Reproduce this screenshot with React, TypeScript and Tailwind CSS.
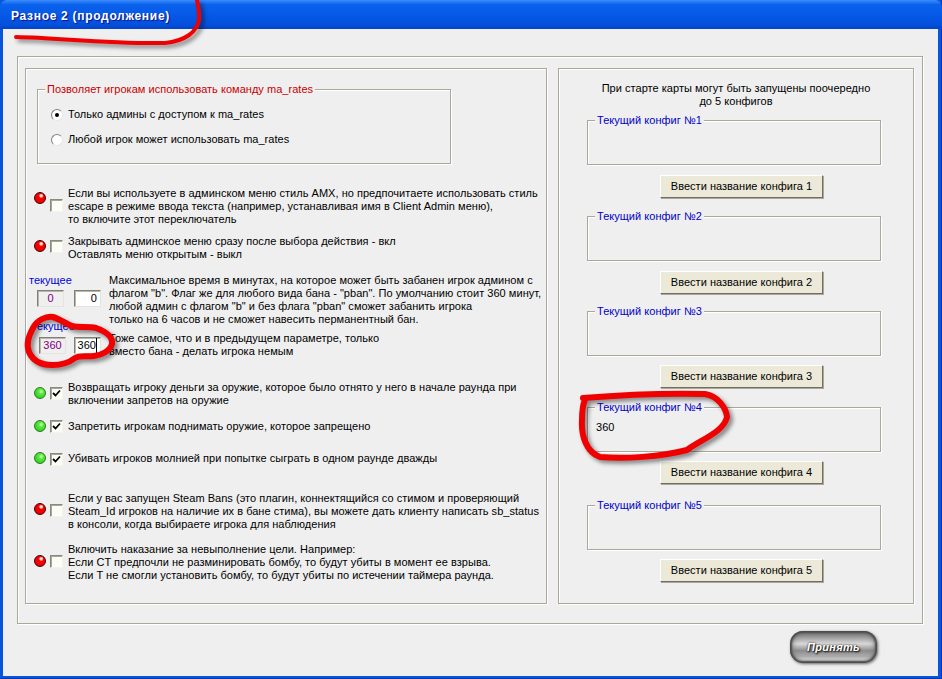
const etched = "border border-[#aca899] shadow-[1px_1px_0_#fff,inset_1px_1px_0_#fff]";

function Led({ on }: { on?: boolean }) {
  return (
    <span
      className={`block w-[12px] h-[12px] rounded-full shrink-0 border ${
        on
          ? "border-[#2a7a20] bg-[radial-gradient(circle_at_62%_35%,#d8ffd0_0%,#58e83c_28%,#34d420_70%,#22a014_100%)]"
          : "border-[#400000] bg-[radial-gradient(circle_at_62%_28%,#ffffff_0%,#ffd0d0_12%,#f80000_26%,#f00000_75%,#a00000_100%)]"
      }`}
    />
  );
}

function Check({ checked }: { checked?: boolean }) {
  return (
    <span className="block w-[13px] h-[13px] shrink-0 bg-[#fdfdf8] border border-[#8a8a7c] border-r-[#f4f4ea] border-b-[#f4f4ea] shadow-[inset_1px_1px_0_#a8a898]">
      {checked && (
        <svg viewBox="0 0 11 11" className="w-[11px] h-[11px]">
          <path d="M2 5 L4.5 7.5 L9 2.5" fill="none" stroke="#000" strokeWidth="1.8" />
        </svg>
      )}
    </span>
  );
}

function Radio({ checked }: { checked?: boolean }) {
  return (
    <span className="flex items-center justify-center w-[12px] h-[12px] rounded-full bg-white border border-[#808080] border-r-[#e8e8e0] border-b-[#e8e8e0] shrink-0">
      {checked && <span className="block w-[4px] h-[4px] rounded-full bg-black" />}
    </span>
  );
}

function OptionRow({
  on,
  checked,
  mt,
  h,
  ledTop,
  checkTop,
  lines,
}: {
  on?: boolean;
  checked?: boolean;
  mt: string;
  h: string;
  ledTop: string;
  checkTop: string;
  lines: string[];
}) {
  return (
    <div className={`flex pl-[8px] ${mt} ${h}`}>
      <div className={`w-[16px] ${ledTop}`}>
        <Led on={on} />
      </div>
      <div className={`w-[18px] ${checkTop}`}>
        <Check checked={checked} />
      </div>
      <div className="whitespace-nowrap">
        {lines.map((l) => (
          <div key={l}>{l}</div>
        ))}
      </div>
    </div>
  );
}

function ReadBox({ value }: { value: string }) {
  return (
    <span className="block w-[27px] h-[17px] leading-[15px] text-center bg-[#efefef] text-[#800080] border border-[#808078] border-r-[#e4e4dc] border-b-[#e4e4dc] shadow-[inset_1px_1px_0_#b8b8a8]">
      {value}
    </span>
  );
}

function EditBox({ value, ml, caret }: { value: string; ml: string; caret?: boolean }) {
  return (
    <span
      className={`flex justify-end w-[27px] h-[17px] ${ml} leading-[15px] pr-[3px] bg-white text-black border border-[#808078] border-r-[#e4e4dc] border-b-[#e4e4dc] shadow-[inset_1px_1px_0_#b8b8a8]`}
    >
      <span className={caret ? "border-r border-black" : ""}>{value}</span>
    </span>
  );
}

function ConfigGroup({ n, mt, btnMt, value }: { n: number; mt: string; btnMt: string; value?: string }) {
  return (
    <div className={mt}>
      <div className={`relative ml-[28px] w-[294px] h-[45px] ${etched}`}>
        <span className="absolute left-[7px] top-[-7px] bg-[#efefef] px-[2px] text-[#0000c8] whitespace-nowrap">
          Текущий конфиг №{n}
        </span>
        {value && <span className="absolute left-[8px] top-[13px] text-black">{value}</span>}
      </div>
      <button
        className={`block ${btnMt} ml-[101px] w-[163px] h-[23px] bg-[#ece9d8] text-black border border-white border-r-[#716f64] border-b-[#716f64] shadow-[1px_1px_0_#aca899]`}
      >
        Ввести название конфига {n}
      </button>
    </div>
  );
}

function Scribble({ d, w }: { d: string; w: number }) {
  return (
    <path d={d} fill="none" stroke="#f00000" strokeWidth={w} strokeLinecap="round" strokeLinejoin="round" />
  );
}

export default function App() {
  return (
    <div className="relative w-[942px] h-[679px] overflow-hidden bg-[#0855dd] pl-[3px] pr-[4px] pb-[3px] flex flex-col text-[11px] leading-[13px] tracking-[0.03px] text-black font-['Liberation_Sans',sans-serif] shadow-[inset_-1px_-1px_0_#003ab0]">
      <div className="-ml-[3px] -mr-[4px] h-[29px] shrink-0 rounded-t-[7px] pl-[11px] pt-[10px] bg-[linear-gradient(#3a8cff_0%,#2a7cf8_6%,#0a62ec_16%,#0558e6_55%,#0450dc_85%,#0344c4_100%)] text-white font-bold text-[12px] tracking-[0.7px] [text-shadow:1px_1px_1px_#0f1089]">
        Разное 2 (продолжение)
      </div>
      <div className="flex-1 bg-[#efefef] pl-[14px] pt-[27px]">
        <div className={`w-[906px] h-[568px] ${etched} pl-[7px] pt-[11px] flex gap-[11px]`}>
          {/* left panel */}
          <div className={`w-[522px] h-[536px] ${etched} pt-[20px]`}>
            <div className={`relative ml-[11px] w-[414px] h-[75px] ${etched} pl-[13px] pt-[18px]`}>
              <span className="absolute left-[7px] top-[-7px] bg-[#efefef] px-[2px] text-[#c80000] whitespace-nowrap">
                Позволяет игрокам использовать команду ma_rates
              </span>
              <div className="flex items-center gap-[5px] h-[13px]">
                <Radio checked />
                <span className="whitespace-nowrap">Только админы с доступом к ma_rates</span>
              </div>
              <div className="flex items-center gap-[5px] h-[13px] mt-[12px]">
                <Radio />
                <span className="whitespace-nowrap">Любой игрок может использовать ma_rates</span>
              </div>
            </div>

            <OptionRow
              mt="mt-[23px]"
              h="h-[39px]"
              ledTop="pt-[5px]"
              checkTop="pt-[12px]"
              lines={[
                "Если вы используете в админском меню стиль AMX, но предпочитаете использовать стиль",
                "escape в режиме ввода текста (например, устанавливая имя в Client Admin меню),",
                "то включите этот переключатель",
              ]}
            />
            <OptionRow
              mt="mt-[9px]"
              h="h-[26px]"
              ledTop="pt-[5px]"
              checkTop="pt-[5px]"
              lines={["Закрывать админское меню сразу после выбора действия - вкл", "Оставлять меню открытым - выкл"]}
            />

            <div className="flex mt-[13px] h-[46px]">
              <div className="w-[83px] pl-[3px] shrink-0">
                <div className="text-[#0000e0]">текущее</div>
                <div className="flex mt-[3px] ml-[8px]">
                  <ReadBox value="0" />
                  <EditBox value="0" ml="ml-[10px]" />
                </div>
              </div>
              <div className="whitespace-nowrap">
                <div>Максимальное время в минутах, на которое может быть забанен игрок админом с</div>
                <div>флагом "b". Флаг же для любого вида бана - "pban". По умолчанию стоит 360 минут,</div>
                <div>любой админ с флагом "b" и без флага "pban" сможет забанить игрока</div>
                <div>только на 6 часов и не сможет навесить перманентный бан.</div>
              </div>
            </div>

            <div className="flex h-[46px]">
              <div className="w-[83px] pl-[6px] shrink-0">
                <div className="text-[#0000e0]">текущее</div>
                <div className="flex mt-[4px] ml-[7px]">
                  <ReadBox value="360" />
                  <EditBox value="360" ml="ml-[8px]" caret />
                </div>
              </div>
              <div className="whitespace-nowrap pt-[12px]">
                <div>Тоже самое, что и в предыдущем параметре, только</div>
                <div>вместо бана - делать игрока немым</div>
              </div>
            </div>

            <OptionRow
              on
              checked
              mt="mt-[15px]"
              h="h-[26px]"
              ledTop="pt-[6px]"
              checkTop="pt-[6px]"
              lines={[
                "Возвращать игроку деньги за оружие, которое было отнято у него в начале раунда при",
                "включении запретов на оружие",
              ]}
            />
            <OptionRow
              on
              checked
              mt="mt-[13px]"
              h="h-[13px]"
              ledTop="pt-[0px]"
              checkTop="pt-[0px]"
              lines={["Запретить игрокам поднимать оружие, которое запрещено"]}
            />
            <OptionRow
              on
              checked
              mt="mt-[19px]"
              h="h-[13px]"
              ledTop="pt-[0px]"
              checkTop="pt-[1px]"
              lines={["Убивать игроков молнией при попытке сыграть в одном раунде дважды"]}
            />
            <OptionRow
              mt="mt-[27px]"
              h="h-[39px]"
              ledTop="pt-[11px]"
              checkTop="pt-[12px]"
              lines={[
                "Если у вас запущен Steam Bans (это плагин, коннектящийся со стимом и проверяющий",
                "Steam_Id игроков на наличие их в бане стима), вы можете дать клиенту написать sb_status",
                "в консоли, когда выбираете игрока для наблюдения",
              ]}
            />
            <OptionRow
              mt="mt-[12px]"
              h="h-[39px]"
              ledTop="pt-[12px]"
              checkTop="pt-[12px]"
              lines={[
                "Включить наказание за невыполнение цели. Например:",
                "Если CT предпочли не разминировать бомбу, то будут убиты в момент ее взрыва.",
                "Если T не смогли установить бомбу, то будут убиты по истечении таймера раунда.",
              ]}
            />
          </div>

          {/* right panel */}
          <div className={`w-[356px] h-[536px] ${etched} pt-[13px]`}>
            <div className="text-center">
              При старте карты могут быть запущены поочередно
              <br />
              до 5 конфигов
            </div>
            <ConfigGroup n={1} mt="mt-[12px]" btnMt="mt-[10px]" />
            <ConfigGroup n={2} mt="mt-[18px]" btnMt="mt-[10px]" />
            <ConfigGroup n={3} mt="mt-[17px]" btnMt="mt-[9px]" />
            <ConfigGroup n={4} mt="mt-[19px]" btnMt="mt-[9px]" value="360" />
            <ConfigGroup n={5} mt="mt-[21px]" btnMt="mt-[9px]" />
          </div>
        </div>
        <div className="flex justify-end pr-[61px] pt-[7px]">
          <button className="w-[87px] h-[32px] rounded-[13px] bg-[linear-gradient(#6a6a6a_0%,#9a9a9a_18%,#d8d8d8_40%,#8c8c8c_62%,#b0b0b0_80%,#f4f4f4_92%,#808080_100%)] shadow-[inset_0_0_2px_2px_#4a4a4a,inset_0_0_5px_3px_rgba(120,120,120,0.7),1px_1px_3px_#666] text-white italic font-bold text-[11px] tracking-[0.3px] [text-shadow:1px_1px_2px_#000,0_0_2px_#222]">
            Принять
          </button>
        </div>
      </div>

      {/* red marker scribbles on top of the screenshot */}
      <svg
        viewBox="0 0 942 679"
        className="absolute inset-0 w-[942px] h-[679px] pointer-events-none drop-shadow-[3px_3px_2px_rgba(0,0,0,0.45)]"
      >
        <Scribble w={4} d="M16 37 C60 38 110 44 165 43 C185 41 197 32 199 20 C200 12 198 6 197 0" />
        <Scribble
          w={6}
          d="M53 317 C46 316 37 320 33 328 C28 337 26 345 29 352 C33 361 42 365 52 365 C62 365 70 362 75 358 C80 355 87 357 94 356 C102 355 110 351 112 344 C113 337 107 332 96 328 C88 326 80 328 72 326 C66 324 60 319 53 317 Z"
        />
        <Scribble
          w={6}
          d="M583 398 C620 395 670 393 705 394 C718 396 726 408 727 417 C724 432 700 440 687 450 C660 457 625 459 600 457 C586 452 581 435 582 420 C582 410 583 404 585 400"
        />
      </svg>
    </div>
  );
}
